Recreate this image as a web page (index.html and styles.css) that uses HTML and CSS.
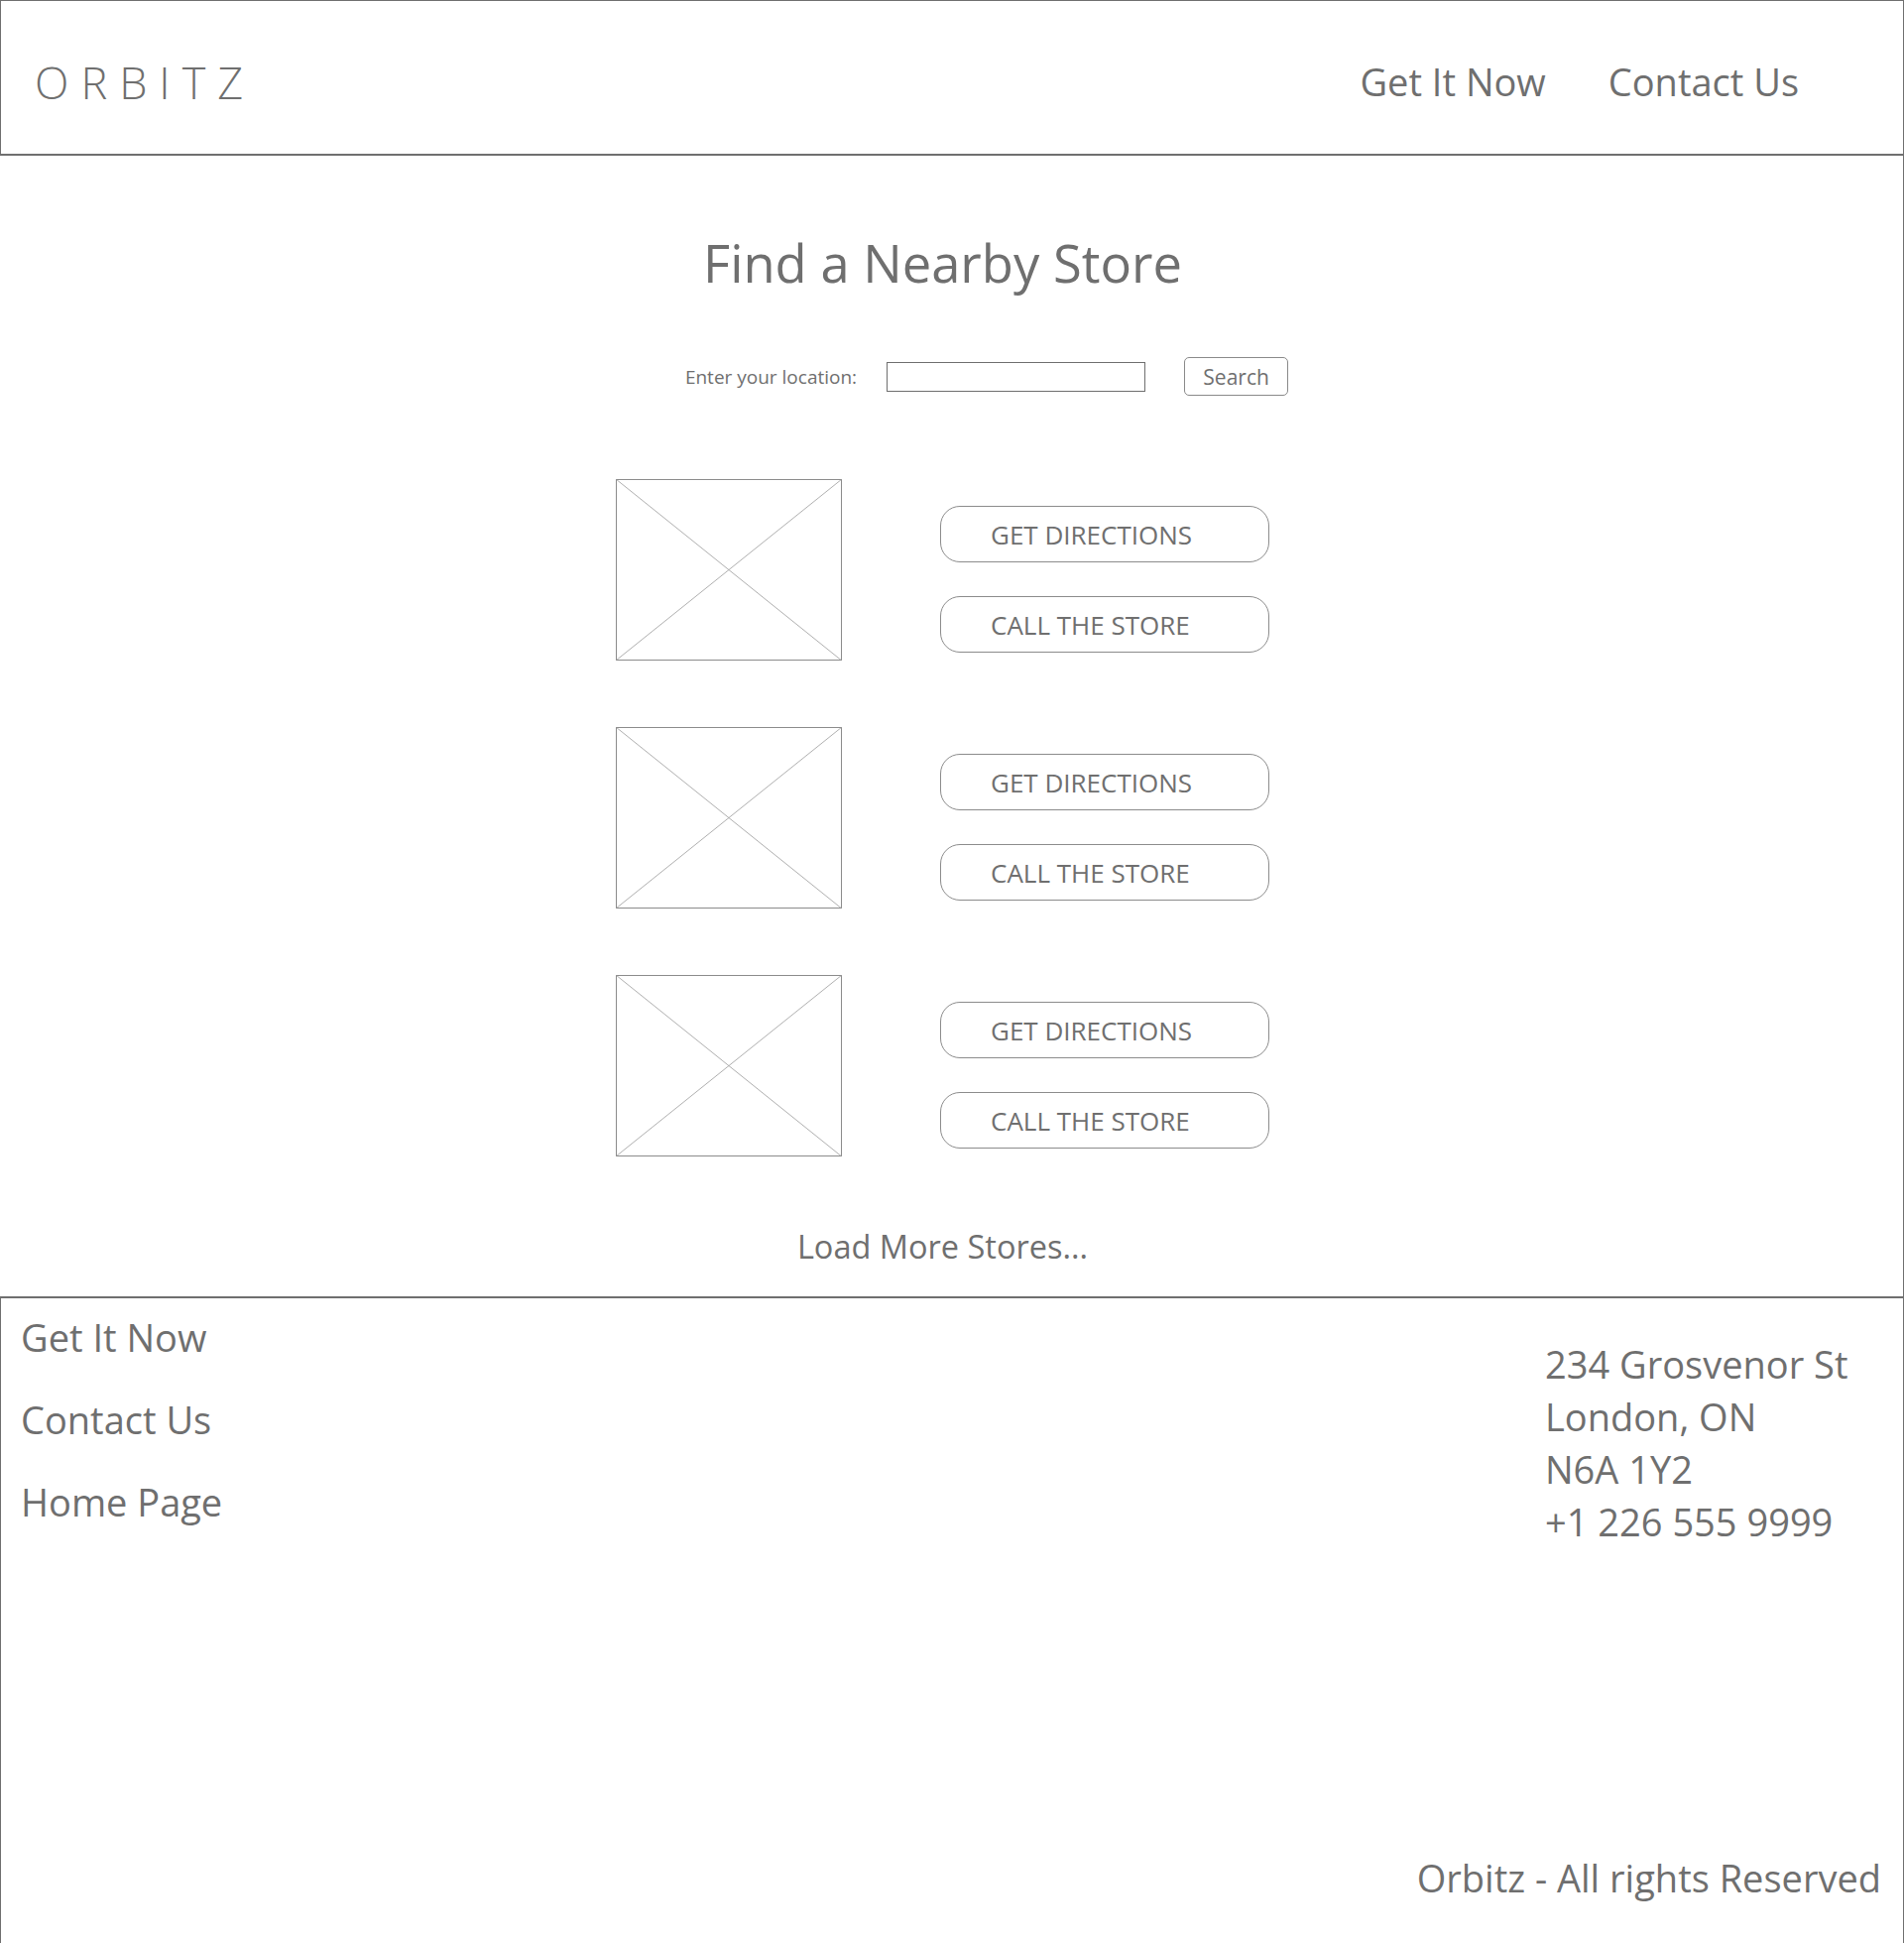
FILE: index.html
```html
<!DOCTYPE html>
<html lang="en">

<head>
    <meta charset="UTF-8">
    <meta name="viewport" content="width=device-width, initial-scale=1.0">
    <title>Orbitz - Find a Nearby Store</title>
    <link rel="stylesheet" href="styles.css">
</head>

<body>
    <header id="top">
        <div class="logo">ORBITZ</div>
        <nav class="nav">
            <a href="#">Get It Now</a>
            <a href="#">Contact Us</a>
        </nav>
    </header>

    <main id="stores">
        <h1>Find a Nearby Store</h1>
        <form class="search">
            <label for="location">Enter your location:</label>
            <input type="text" id="location">
            <button type="button">Search</button>
        </form>

        <ul class="store-list">
            <li class="store">
                <svg class="placeholder" viewBox="0 0 228 183" preserveAspectRatio="none">
                    <rect x="0.5" y="0.5" width="227" height="182"></rect>
                    <line x1="0" y1="0" x2="229" y2="184"></line>
                    <line x1="228" y1="0" x2="0" y2="183"></line>
                </svg>
                <div class="actions">
                    <button type="button">GET DIRECTIONS</button>
                    <button type="button">CALL THE STORE</button>
                </div>
            </li>
            <li class="store">
                <svg class="placeholder" viewBox="0 0 228 183" preserveAspectRatio="none">
                    <rect x="0.5" y="0.5" width="227" height="182"></rect>
                    <line x1="0" y1="0" x2="229" y2="184"></line>
                    <line x1="228" y1="0" x2="0" y2="183"></line>
                </svg>
                <div class="actions">
                    <button type="button">GET DIRECTIONS</button>
                    <button type="button">CALL THE STORE</button>
                </div>
            </li>
            <li class="store">
                <svg class="placeholder" viewBox="0 0 228 183" preserveAspectRatio="none">
                    <rect x="0.5" y="0.5" width="227" height="182"></rect>
                    <line x1="0" y1="0" x2="229" y2="184"></line>
                    <line x1="228" y1="0" x2="0" y2="183"></line>
                </svg>
                <div class="actions">
                    <button type="button">GET DIRECTIONS</button>
                    <button type="button">CALL THE STORE</button>
                </div>
            </li>
        </ul>

        <a class="load-more" href="#">Load More Stores...</a>
    </main>

    <footer id="bottom">
        <div class="footer-top">
            <ul class="footer-links">
                <li><a href="#">Get It Now</a></li>
                <li><a href="#">Contact Us</a></li>
                <li><a href="#">Home Page</a></li>
            </ul>
            <address>
                234 Grosvenor St<br>
                London, ON<br>
                N6A 1Y2<br>
                +1 226 555 9999
            </address>
        </div>
        <p class="copyright">Orbitz - All rights Reserved</p>
    </footer>
</body>

</html>
```

FILE: styles.css
```css
body {
    margin: 0px;
    font-family: "Open Sans", "Noto Sans", sans-serif;
    color: #6f6f6f;
    background: #fff;
}

a {
    color: inherit;
    text-decoration: none;
}

ul {
    list-style: none;
    margin: 0px;
    padding: 0px;
}

/* header */

#top {
    height: 157px;
    box-sizing: border-box;
    border: 1px solid #6f6f6f;
    border-bottom-width: 2px;
    display: flex;
    align-items: center;
    justify-content: space-between;
    padding: 8px 105px 0px 34px;
}

.logo {
    font-size: 45px;
    font-weight: 300;
    letter-spacing: 12px;
}

.nav {
    display: flex;
    gap: 63px;
    font-size: 38px;
}

/* main */

#stores {
    border-right: 1px solid #6f6f6f;
    padding: 76px 18px 31px 0px;
    display: flex;
    flex-direction: column;
    align-items: center;
}

h1 {
    font-size: 52.5px;
    font-weight: 400;
    line-height: 64px;
    margin: 0px;
}

.search {
    display: flex;
    align-items: center;
    margin: 63px 0px 0px 89px;
    height: 39px;
}

.search label {
    font-size: 19px;
    margin-right: 30px;
}

.search input {
    width: 261px;
    height: 30px;
    box-sizing: border-box;
    border: 1px solid #6f6f6f;
    border-radius: 0px;
    margin-right: 39px;
}

.search button {
    width: 105px;
    height: 39px;
    box-sizing: border-box;
    border: 1px solid #8a8a8a;
    border-radius: 5px;
    background: #fff;
    color: #6f6f6f;
    font-family: inherit;
    font-size: 21px;
    padding: 0px;
}

.store-list {
    margin-top: 84px;
    display: flex;
    flex-direction: column;
    gap: 67px;
}

.store {
    display: flex;
    gap: 99px;
}

.placeholder {
    width: 228px;
    height: 183px;
    display: block;
}

.placeholder rect {
    fill: none;
    stroke: #8c8c8c;
    stroke-width: 1;
}

.placeholder line {
    stroke: #9a9a9a;
    stroke-width: 0.8;
}

.actions {
    display: flex;
    flex-direction: column;
    gap: 34px;
    padding-top: 27px;
}

.actions button {
    width: 332px;
    height: 57px;
    box-sizing: border-box;
    border: 1px solid #8c8c8c;
    border-radius: 20px;
    background: #fff;
    color: #6f6f6f;
    font-family: inherit;
    font-size: 26px;
    text-align: left;
    padding: 0px 0px 0px 50px;
}

.load-more {
    margin-top: 72px;
    font-size: 32.5px;
    line-height: 38px;
}

/* footer */

#bottom {
    height: 652px;
    box-sizing: border-box;
    border: 1px solid #6f6f6f;
    border-top-width: 2px;
    border-bottom: none;
    padding: 16px 22px 43px 20px;
    display: flex;
    flex-direction: column;
}

.footer-top {
    display: flex;
    justify-content: space-between;
}

.footer-links {
    display: flex;
    flex-direction: column;
    gap: 37px;
    font-size: 38px;
    line-height: 46px;
}

address {
    font-style: normal;
    font-size: 38px;
    line-height: 53px;
    width: 339px;
    margin-top: 24px;
}

.copyright {
    margin: auto 0px 0px 0px;
    text-align: right;
    font-size: 38px;
    line-height: 46px;
}
```
